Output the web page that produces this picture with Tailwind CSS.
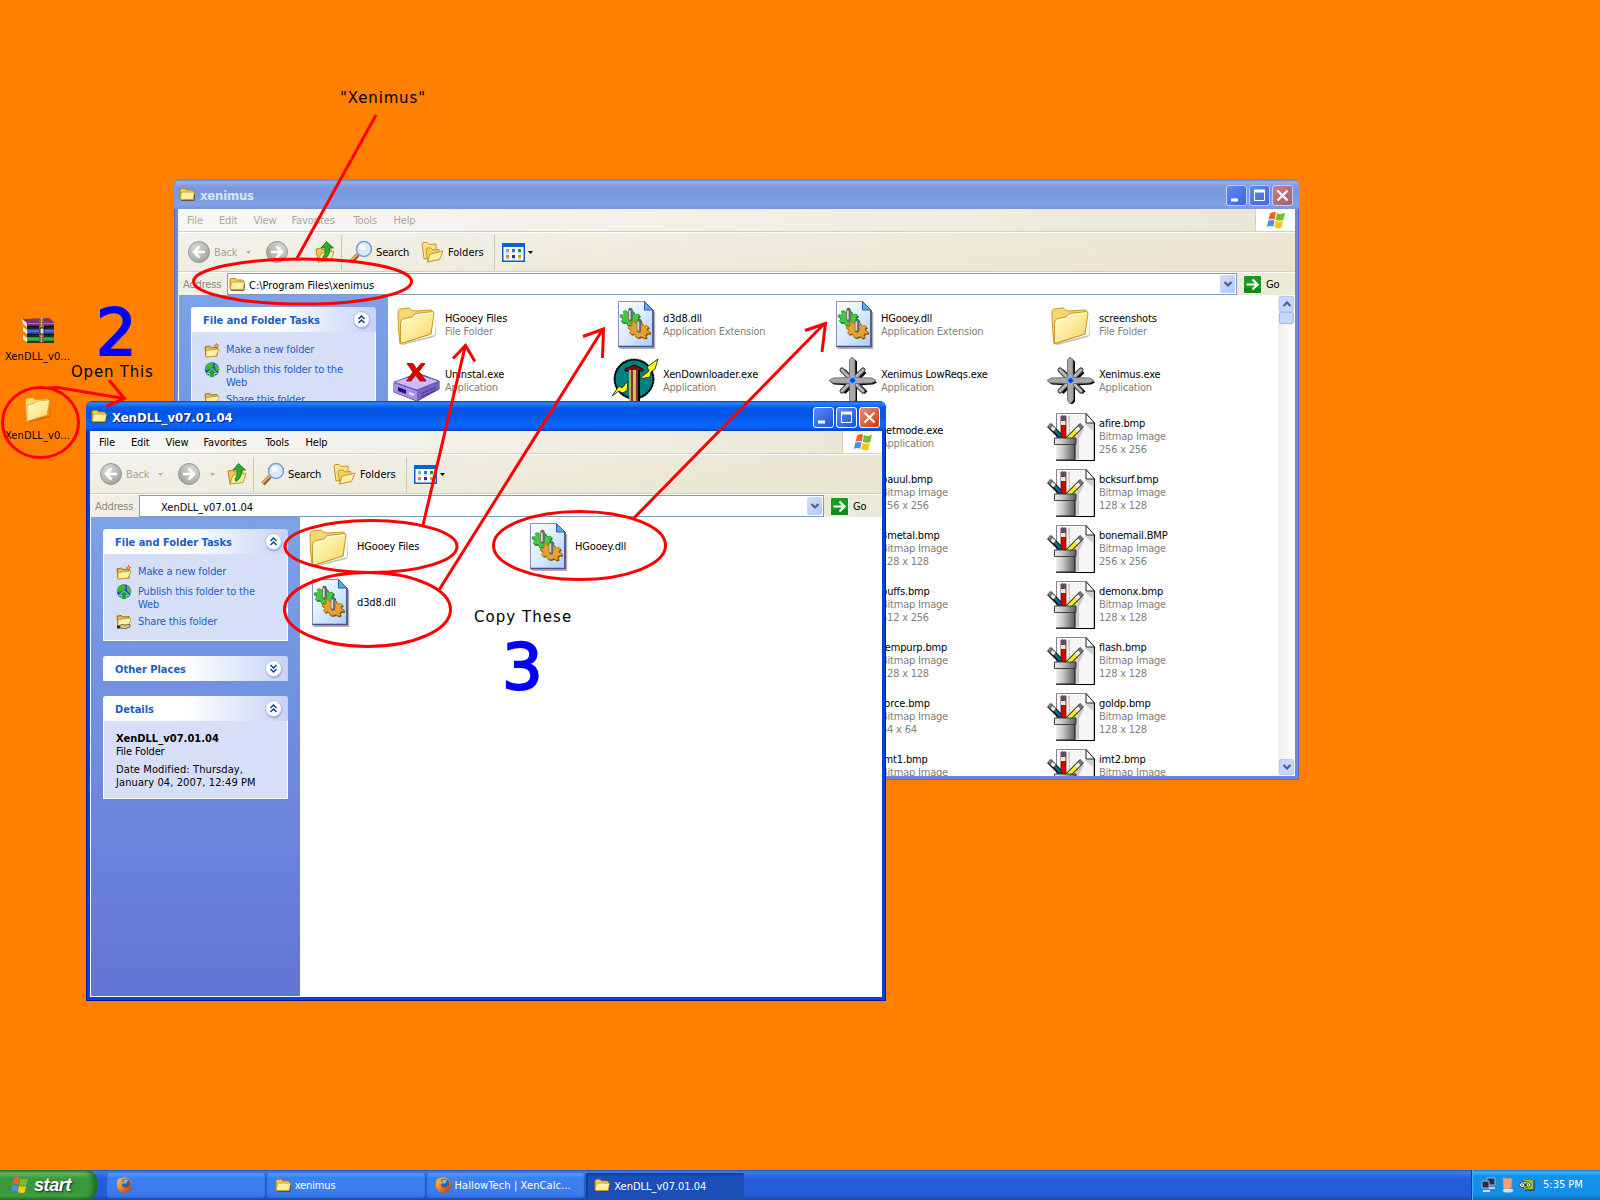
<!DOCTYPE html>
<html lang="en">
<head>
<meta charset="utf-8">
<title>Desktop</title>
<script src="https://cdn.jsdelivr.net/npm/@tailwindcss/browser@4"></script>
</head>
<body class="relative w-[1600px] h-[1200px] overflow-hidden bg-[#ff8000] font-['DejaVu_Sans_Condensed','DejaVu_Sans',sans-serif] [font-stretch:condensed] text-[11px] leading-[13px] tracking-[-0.15px] text-black">

<svg class="absolute w-0 h-0" aria-hidden="true">
  <defs>
    <linearGradient id="gFold" x1="0" y1="0" x2="1" y2="1"><stop offset="0" stop-color="#fffbd0"/><stop offset=".5" stop-color="#fdec9a"/><stop offset="1" stop-color="#f4cc5c"/></linearGradient>
    <linearGradient id="gPage" x1="0" y1="0" x2="1" y2="1"><stop offset="0" stop-color="#fff"/><stop offset=".5" stop-color="#d9ecfd"/><stop offset="1" stop-color="#a9cdf5"/></linearGradient>
    <linearGradient id="gCup" x1="0" y1="0" x2="1" y2="0"><stop offset="0" stop-color="#eee"/><stop offset=".35" stop-color="#c8c8c8"/><stop offset="1" stop-color="#5a5a5a"/></linearGradient>
    <radialGradient id="gBtn" cx=".35" cy=".3" r=".8"><stop offset="0" stop-color="#d8d8d4"/><stop offset=".6" stop-color="#b9b9b5"/><stop offset="1" stop-color="#9a9a96"/></radialGradient>
    <linearGradient id="gFox" x1="0" y1="0" x2="1" y2="1"><stop offset="0" stop-color="#ffc04a"/><stop offset=".5" stop-color="#f08020"/><stop offset="1" stop-color="#b83008"/></linearGradient>
    <path id="gear" d="M-1.800 -10.500h3.600l.6 2.600 2.400 1 2.400-1.600 2.400 2.400-1.500 2.300 1 2.300 2.700.6v3l-2.700.7-1 2.300 1.500 2.300-2.400 2.300-2.400-1.500-2.400 1L1.800 10.500h-3.600l-.6-2.600-2.400-1-2.400 1.500-2.400-2.300 1.500-2.300-1-2.300-2.700-.7v-3l2.700-.6 1-2.300-1.500-2.300 2.400-2.400 2.400 1.600 2.400-1z"/>
    <symbol id="folder48" viewBox="0 0 48 48">
      <path d="M8 43 L42 34 L43 13 L43 34 L41 36 L10 44z" fill="#000" opacity=".25"/>
      <path d="M5 12 C5 8 7 8 8 8 L15 7 C17 6.500 18 9 19 9.500 L23 10 L38 9 L40 10.500 L38 33 L7 43 Q5 28 5 12z" fill="#f6d872" stroke="#c79a28"/>
      <path d="M7.500 22 Q7.500 18 11 17.500 L19 16 L22 12.500 L40 10.500 L41 12.500 L38 33 L7.500 42.500z" fill="url(#gFold)" stroke="#c79a28"/>
      <path d="M9 24 Q9 19.500 11.500 19 L19.500 17.500 L22.500 14 L39.500 12" fill="none" stroke="#fffde8"/>
    </symbol>
    <symbol id="folder16" viewBox="0 0 16 16">
      <path d="M1 4 Q1 2.500 2 2.500 L6 2.200 L7.500 4 L13.500 4 L14.500 5 L14.500 13 L2 14 L1 13z" fill="#f5cf5c" stroke="#a87a18" stroke-width=".9"/>
      <path d="M2.500 6 L15.500 6.200 L14.500 13.300 L2 13.500 L1.500 12z" fill="#ffefa8" stroke="#c79a28" stroke-width=".8"/>
      <path d="M2 14.500 H15 L15.600 8" fill="none" stroke="#5a4410" stroke-width=".8"/>
    </symbol>
    <symbol id="dll" viewBox="0 0 48 48">
      <path d="M9 47.500 H43.500 V11" fill="none" stroke="#000" stroke-opacity=".3" stroke-width="1.500"/>
      <path d="M7.500 .5 H33.500 L42 9 V45.500 H7.500z" fill="url(#gPage)" stroke="#8a8fc0" stroke-width="1"/>
      <path d="M42 9 V45.700 H7.500" fill="none" stroke="#4a4c8c" stroke-width="1.700"/>
      <path d="M33.500 .5 V9 H42z" fill="#5aa4f0" stroke="#2d5cae" stroke-width="1"/>
      <use href="#gear" transform="translate(20.500 18.500) rotate(12) scale(.92 .72)" fill="#147018"/>
      <use href="#gear" transform="translate(19.500 17.500) rotate(12) scale(.9 .7)" fill="#44c83e" stroke="#1e8a24" stroke-width=".8"/>
      <use href="#gear" transform="translate(29 30) rotate(12) scale(.95 .75)" fill="#7c4808"/>
      <use href="#gear" transform="translate(28 29) rotate(12) scale(.93 .73)" fill="#e8a030" stroke="#a86410" stroke-width=".8"/>
      <path d="M19.500 9v9.500M28 20v9.500" stroke="#666" stroke-width="4.500" stroke-linecap="round"/><path d="M18.800 9.500v9M27.300 20.500v9" stroke="#d8d8d8" stroke-width="1.800"/>
    </symbol>
    <symbol id="bmp" viewBox="0 0 48 48">
      <path d="M9.500 .5 H39 L47 9 V47.500 H9.500z" fill="#f6f6f6" stroke="#888"/>
      <path d="M38 11 L46 18 V10z" fill="#d0d0d0"/>
      <path d="M21 3 H23 V24 L34 14 L37 17 L32 25 V46 H24 L22 26z" fill="#ccc"/>
      <path d="M39 .5 V10 H47.500z" fill="#fff" stroke="#222"/>
      <path d="M47.500 10 V47.500 H9" fill="none" stroke="#000"/>
      <path d="M2 12 L16 26" stroke="#111" stroke-width="5.500"/><path d="M6 15.500 L16 25.500" stroke="#00708c" stroke-width="3"/><path d="M4.500 14 L7.500 17" stroke="#eee" stroke-width="3.500"/><path d="M1.800 11.600 L4.500 14.200" stroke="#777" stroke-width="4"/>
      <path d="M35 12 L21 26" stroke="#333" stroke-width="5.500"/><path d="M31 16 L21 26" stroke="#f4ee30" stroke-width="3.500"/><path d="M32.500 14.500 L29.500 17.500" stroke="#eee" stroke-width="3.500"/><path d="M35 12 L32.500 14.500" stroke="#777" stroke-width="4"/>
      <path d="M14 3h5v22h-5z" fill="#d80000" stroke="#500" stroke-width=".7"/><path d="M14 8h4.500v4h-4.500z" fill="#eee"/><path d="M14 3h5v5h-5z" fill="#555"/>
      <path d="M9 31 H28 V47.500 H9z" fill="url(#gCup)"/><path d="M28 31V47H9" fill="none" stroke="#111"/>
      <path d="M7.500 25 H29 V31.500 H7.500z" fill="url(#gCup)" stroke="#333" stroke-width=".9"/>
    </symbol>
    <symbol id="star" viewBox="0 0 48 48">
      <g fill="#000" transform="translate(2 1.600)"><path d="M23 0 L26 3 V20 L42 21 L46 24 L42 26 L26 27 V43 L23 46 L20 43 V27 L3 26 L0 24 L3 22 L20 20 V3z"/><path d="M13 12l22 22M34 13L13 34" stroke="#000" stroke-width="4"/></g>
      <path d="M13 13l21 21M34 13L13 34" stroke="#444" stroke-width="5" stroke-linecap="round"/><path d="M13 13l21 21M34 13L13 34" stroke="#b8b8b8" stroke-width="2.800" stroke-linecap="round"/>
      <path d="M23 0 L26 3 V20.500 L43 21 L47 23.500 L43 26 L26.500 26.500 V43 L23 47 L20.500 43 V26.500 L4 26 L0 23.500 L4 21 L20.500 20.500 V3z" fill="#a8a8a8" stroke="#666" stroke-width=".8"/>
      <path d="M23.500 19.500 L27.500 23.500 L23.500 27.500 L19.500 23.500z" fill="#30c8ff"/><path d="M23.500 21v5M21 23.500h5" stroke="#0030ff" stroke-width="2"/>
    </symbol>
    <symbol id="uninst" viewBox="0 0 48 48">
      <path d="M1 26 L24 16 L46 24 V32 L24 44 L1 35z" fill="#5c44a8" stroke="#38287c"/>
      <path d="M1 25 L24 17 L46 24 L24 33z" fill="#cbbcf4" stroke="#7c64c8"/>
      <path d="M1 26 L24 34 V44 L1 35z" fill="#a890e4"/><path d="M24 34 L46 25 V32 L24 44z" fill="#7860c4"/>
      <path d="M5 30 L13 33 V37 L5 34z" fill="#201470"/><path d="M16 36l5 2" stroke="#e8e0ff" stroke-width="2"/><path d="M28 37l15-7M28 40l15-7" stroke="#4a3494"/>
      <path d="M14 14.500 H20 L23.500 20 L28 14.500 H32 L26 22.500 L33 32 H27 L22.500 26 L18 32 H13.500 L20 23z" transform="translate(0 -8)" fill="#e00000" stroke="#900" stroke-width=".8"/>
    </symbol>
    <symbol id="down" viewBox="0 0 48 48">
      <circle cx="23" cy="22" r="20" fill="#000" stroke="#000" stroke-dasharray="2 1"/><circle cx="23" cy="22" r="18.500" fill="#008080"/>
      <path d="M14 12 L23 8 L32 12 V14 H14z" fill="#7a1010" stroke="#200"/><path d="M18 13h10v35h-10z" fill="#7c3038"/><path d="M18 13h2v35h-2z" fill="#c0b060"/><path d="M22 13h3v35h-3z" fill="#d8c040"/><path d="M27 13h2v35h-2z" fill="#100"/>
      <path d="M47 2 L36 10 L38 14 L28 22 L39 20 L40 15 L44 12z" fill="#ffff20" stroke="#222" stroke-width=".9"/>
      <path d="M1 39 L8 29 L11 31 L17 24 L16 34 L11 36 L8 34z" fill="#ffff20" stroke="#222" stroke-width=".9"/>
    </symbol>
    <symbol id="flag" viewBox="0 0 20 18">
      <path d="M4 2.500 Q7 0 10 1.500 L8.700 8.500 Q5.500 7.200 2.500 9z" fill="#f0602c"/>
      <path d="M11 2 Q14.500 4 19 1.800 L17.300 9 Q13.500 10.500 9.700 8.800z" fill="#72c02c"/>
      <path d="M2.200 9.800 Q5.500 8.200 8.500 9.500 L7.200 15.800 Q4 14 .8 16z" fill="#4a8ee8"/>
      <path d="M9.500 9.800 Q13 11.400 17 10 L15.600 16.500 Q12 18.500 8.200 16.300z" fill="#fcc414"/>
    </symbol>
    <symbol id="fox" viewBox="0 0 16 16">
      <circle cx="8" cy="8" r="7.700" fill="url(#gFox)"/><circle cx="8.800" cy="6.600" r="5.200" fill="#2d62b0"/><path d="M6.500 3 Q9 1.500 12 3 Q10 4 10.500 6 L8 7z" fill="#7ab8e8"/>
      <path d="M.6 5 Q1 2 3 1.300 Q3.500 3 5.500 3.500 L8 6 Q5 6.500 5.500 9 Q8 12 12 9.800 Q14.500 8.500 14.500 4 Q16.500 8 14 12 Q11 16 6.500 15 Q0 13 .6 5z" fill="url(#gFox)"/>
    </symbol>
    <symbol id="newf" viewBox="0 0 16 16"><path d="M1 5 L5 4 L7 5.500 L13 5 V14 L2 15z" fill="#e8b84a" stroke="#9c7018"/><path d="M2 9 L6 8 L15 7 L12 14 L2 15z" fill="#fff0b0" stroke="#c79a28" stroke-width=".8"/><path d="M12.500 .5l.8 2 2 .5-1.500 1.500.5 2.300-2-1.300-2 1 .8-2.300-1.300-1.500 2 0z" fill="#f0501c"/><circle cx="12.500" cy="4" r="1" fill="#ffd040"/></symbol>
    <symbol id="globe" viewBox="0 0 16 16"><circle cx="8" cy="7.500" r="7.200" fill="#2858b4"/><path d="M2 3 Q5 0 8 .5 L10 4 L6 7 L2 8 L.8 7z" fill="#3cb83c"/><path d="M11 1 L15 6 V10 L12 8 L11 5z" fill="#48c040"/><path d="M8 6.500 L13 11.500 H10.300 V15.500 H5.700 V11.500 H3z" fill="#18a030" stroke="#d8f0d8" stroke-width=".7"/></symbol>
    <symbol id="share" viewBox="0 0 16 16"><path d="M1 2 L5 1.500 L7 3 L13 2.500 V11 L2 12z" fill="#e8b84a" stroke="#9c7018"/><path d="M2 6 L6 5 L15 4 L13 11 L2 12z" fill="#fff0b0" stroke="#c79a28" stroke-width=".8"/><path d="M1 11.500h3v3h-3z" fill="#223"/><path d="M4 11.500 Q6 9.500 9 11 L14 10.500 V13 L9 14.800 L4 14z" fill="#e8c090" stroke="#553" stroke-width=".8"/></symbol>
    <symbol id="upf" viewBox="0 0 20 22"><path d="M1 8 L6 7 L7 9 L16 8 V19 L3 21z" fill="#f0c850" stroke="#b48a20"/><path d="M3 21 L6 12 L19 10.500 L16 19.500z" fill="#ffefa0" stroke="#c79a28"/><path d="M11.500 .5 L18.500 7 H14.500 Q15 15 9 18.500 L8 16 Q11 13 10.200 7 H6z" fill="#2cac2c" stroke="#107010" stroke-width=".8"/></symbol>
    <symbol id="search" viewBox="0 0 24 24"><path d="M2 22 L9 14.500" stroke="#a05c28" stroke-width="4.500"/><path d="M1.500 21 L8.500 14" stroke="#f0a868" stroke-width="2"/><circle cx="15" cy="9" r="7.500" fill="#d4ebff" stroke="#7a9cd0" stroke-width="1.500"/><circle cx="13.500" cy="7" r="3" fill="#fff" opacity=".85"/></symbol>
    <symbol id="folders" viewBox="0 0 24 22"><path d="M1 3 L2 1.500 L6 1.500 L8 3.500 L15 3 V15 L3 18z" fill="#fbe28c" stroke="#c4962c"/><path d="M5 9 L6 7 L10 7 L12 9 L18 8.500 V18 L7 21z" fill="#f6d060" stroke="#c4962c"/><path d="M6.500 21 L9 13 L14 12 L22 10 L18.500 18.500z" fill="#fff0a8" stroke="#c4962c"/></symbol>
    <symbol id="views" viewBox="0 0 23 19"><rect x=".75" y=".75" width="21.500" height="17.500" fill="#fff" stroke="#0a5cc8" stroke-width="1.500"/><path d="M0 0h23v4h-23z" fill="#0a64d8"/><g><path d="M4 6h3v3h-3z" fill="#9898c8"/><path d="M10 6h3v3h-3z" fill="#2878d0"/><path d="M16 6h3v3h-3z" fill="#209820"/><path d="M4 12h3v3h-3z" fill="#f07840"/><path d="M10 12h3v3h-3z" fill="#1038a0"/><path d="M16 12h3v3h-3z" fill="#d89c20"/><path d="M4 10h3M10 10h3M16 10h3M4 16h3M10 16h3M16 16h3" stroke="#aaa" stroke-width=".8"/></g></symbol>
    <symbol id="back" viewBox="0 0 22 22"><circle cx="11" cy="11" r="10.500" fill="url(#gBtn)" stroke="#989894"/><path d="M11.500 5.500 L6 11 L11.500 16.500 M6.500 11 H17" fill="none" stroke="#fff" stroke-width="2.600"/></symbol>
    <symbol id="rar" viewBox="0 0 32 25">
      <path d="M1 1 L27 0 L32 4 V8 H6 L1 5z" fill="#7c3474"/><path d="M0 1l5 4v4l-4-3z" fill="#f0e8f0"/><path d="M5 8.500h27" stroke="#111" stroke-width="1.500"/>
      <path d="M5 9 H30 L32 11 V16 H6z" fill="#2450c4"/><path d="M1 9l4 3v4l-4-3z" fill="#f0f0f8"/><path d="M5 10h27M5 16.500h27" stroke="#111" stroke-width="1.500"/>
      <path d="M5 17 H30 L32 19 V23 H6z" fill="#189838"/><path d="M1 17l4 3v4l-4-3z" fill="#f0f8f0"/><path d="M5 18h27M5 24h27" stroke="#111" stroke-width="1.500"/>
      <path d="M6 5.500h26M6 13h26M6 21h26" stroke="#fff" stroke-opacity=".35"/>
      <path d="M17 0h5v24h-5z" fill="#8c5828"/><path d="M19.500 0v24" stroke="#e8d8b0" stroke-width="1.500" stroke-dasharray="1.500 1"/><rect x="18" y="10" width="4" height="6" rx="1.500" fill="#ddd" stroke="#222"/>
    </symbol>
    <symbol id="chev" viewBox="0 0 20 20"><circle cx="10" cy="11" r="8.500" fill="#7088c8" opacity=".45"/><circle cx="9.500" cy="9.500" r="8" fill="#fff" stroke="#b8bcd8"/><path d="M6.500 9 L9.500 6 L12.500 9 M6.500 13 L9.500 10 L12.500 13" fill="none" stroke="#0a3c9c" stroke-width="1.500"/></symbol>
    <symbol id="chevd" viewBox="0 0 20 20"><circle cx="10" cy="11" r="8.500" fill="#7088c8" opacity=".45"/><circle cx="9.500" cy="9.500" r="8" fill="#fff" stroke="#b8bcd8"/><path d="M6.500 6 L9.500 9 L12.500 6 M6.500 10 L9.500 13 L12.500 10" fill="none" stroke="#0a3c9c" stroke-width="1.500"/></symbol>
    <symbol id="vdown" viewBox="0 0 10 10"><path d="M1.500 3 L5 6.500 L8.500 3" fill="none" stroke="#4d6185" stroke-width="2.200"/></symbol>
    <symbol id="vup" viewBox="0 0 10 10"><path d="M1.500 7 L5 3.500 L8.500 7" fill="none" stroke="#4d6185" stroke-width="2.200"/></symbol>
    <symbol id="car" viewBox="0 0 5 3"><path d="M0 0h5L2.500 3z" fill="currentColor"/></symbol>
  </defs>
</svg>

<!-- Desktop shortcuts -->
<div class="absolute left-0 top-[318px] w-[75px] flex flex-col items-center tracking-[0.1px]">
  <svg class="w-8 h-[25px]"><use href="#rar"/></svg>
  <span class="mt-[7px]">XenDLL_v0...</span>
</div>
<div class="absolute left-0 top-[393px] w-[75px] flex flex-col items-center tracking-[0.1px]">
  <svg class="w-8 h-8"><use href="#folder48"/></svg>
  <span class="mt-[4px]">XenDLL_v0...</span>
</div>

<div id="win1" class="absolute left-[174px] top-[179px] w-[1125px] h-[601px]"></div>
<div id="win2" class="absolute left-[86px] top-[401px] w-[800px] h-[600px]"></div>

<!-- Taskbar -->
<div class="absolute left-0 top-[1170px] w-[1600px] h-[30px] flex bg-[linear-gradient(#1f50b8_0,#3b83ee_2px,#2e6be6_5px,#245cdc_10px,#245edb_24px,#1d49b0_30px)] text-white">
  <div class="w-[97px] h-[30px] rounded-r-[10px] flex items-center pl-[10px] bg-[linear-gradient(#2f7a2f_0,#6cb86a_3px,#3f9a3f_8px,#3a963a_20px,#3ea23e_26px,#2a742a_30px)] shadow-[inset_-4px_0_5px_#1f6a1f]">
    <svg class="w-[19px] h-[18px]"><use href="#flag"/></svg>
    <span class="ml-[5px] mb-[1px] font-['Liberation_Sans',sans-serif] font-bold italic text-[18px] leading-[20px] tracking-[-0.4px] [text-shadow:1px_1px_2px_#123]">start</span>
  </div>
  <div class="ml-[10px] mt-[3px] flex h-[25px] w-[637px] gap-[2px]">
    <div class="w-[158px] rounded-[2px] flex items-center pl-[9px] bg-[linear-gradient(#5c9cf8,#3c80f0_5px,#3a7cee_20px,#2f6ce0)] shadow-[inset_0_0_1px_#1d4cb0]"><svg class="w-[17px] h-[16px] mb-[2px]"><use href="#fox"/></svg></div>
    <div class="w-[158px] rounded-[2px] flex items-center pl-[8px] bg-[linear-gradient(#5c9cf8,#3c80f0_5px,#3a7cee_20px,#2f6ce0)] shadow-[inset_0_0_1px_#1d4cb0]"><svg class="w-4 h-4 mb-[2px]"><use href="#folder16"/></svg><span class="ml-[4px]">xenimus</span></div>
    <div class="w-[158px] rounded-[2px] flex items-center pl-[8px] bg-[linear-gradient(#5c9cf8,#3c80f0_5px,#3a7cee_20px,#2f6ce0)] shadow-[inset_0_0_1px_#1d4cb0]"><svg class="w-[17px] h-[16px] mb-[2px]"><use href="#fox"/></svg><span class="ml-[3px] whitespace-nowrap tracking-[0.1px]">HallowTech | XenCalc...</span></div>
    <div class="w-[158px] rounded-[2px] flex items-center pl-[8px] pt-[1px] bg-[#1b4fb8] shadow-[inset_1px_1px_2px_#0f3478]"><svg class="w-4 h-4 mb-[2px]"><use href="#folder16"/></svg><span class="ml-[4px] tracking-[0]">XenDLL_v07.01.04</span></div>
  </div>
  <div class="ml-auto w-[129px] h-[30px] flex items-center border-l border-[#0c3c9c] bg-[linear-gradient(#1478d8_0,#38b4f8_2px,#1690e8_6px,#1290e8_24px,#0e6cc0_30px)] shadow-[inset_1px_0_0_#3cb8f8]">
    <svg class="ml-[9px] w-[54px] h-[16px]" viewBox="0 0 54 16">
      <path d="M6 1h8v7h-8z" fill="#282c50" stroke="#a8b0d8"/><path d="M8 10h6v2h-6z" fill="#ccd"/><path d="M1 4h7v7h-7z" fill="#282c50" stroke="#a8b0d8"/><path d="M2 13h7v2h-7z" fill="#dde"/>
      <path d="M22 1l9 1-1 9-7 1z" fill="#f4a07c" stroke="#e88868"/><ellipse cx="27" cy="13.500" rx="5.500" ry="2" fill="#d8dce8"/>
      <path d="M43 3h10v10h-10z" fill="#98c020"/><path d="M53 3v10h-9" fill="none" stroke="#222"/><path d="M37.500 8q6.500-7 13 0q-6.500 6-13 0z" fill="#fff" stroke="#333" stroke-width=".8"/><path d="M40 8q4-4 8 0q-4 4-7 0" fill="none" stroke="#5c8010"/><circle cx="44.500" cy="8" r="1.300" fill="#222"/>
    </svg>
    <span class="ml-[8px] mb-[1px] whitespace-nowrap tracking-[0]">5:35 PM</span>
  </div>
</div>

<!-- Hand-drawn notes -->
<svg class="absolute left-0 top-0 w-[1600px] h-[1200px]" fill="none" stroke="#f00" stroke-width="3" viewBox="0 0 1600 1200">
  <path d="M376 115 L296 260"/>
  <ellipse cx="302.500" cy="281.500" rx="109" ry="22.500"/>
  <ellipse cx="40.500" cy="422.500" rx="38" ry="35"/>
  <path d="M48 388 L58 387.500 L124 398.500 M109 380 L124.500 398.500 L106 406.500"/>
  <path d="M423 525 L465.500 345 M453 358.500 L465.500 345.500 L475 361.500"/>
  <path d="M439 590 L603 329 M583 336.500 L603.500 329 L602.500 358"/>
  <path d="M634 518 L825 323 M805 330.500 L825.500 323.500 L822 352"/>
  <ellipse cx="371" cy="546.500" rx="86" ry="26"/>
  <ellipse cx="367.500" cy="609.500" rx="83" ry="37"/>
  <ellipse cx="579.500" cy="545.500" rx="86" ry="34"/>
</svg>
<div class="absolute left-[340px] top-[88px] font-['DejaVu_Sans',sans-serif] [font-stretch:normal] text-[15px] leading-[20px] tracking-[0.85px]">"Xenimus"</div>
<div class="absolute left-[71px] top-[362px] font-['DejaVu_Sans',sans-serif] [font-stretch:normal] text-[15px] leading-[20px] tracking-[0.8px]">Open This</div>
<div class="absolute left-[474px] top-[607px] font-['DejaVu_Sans',sans-serif] [font-stretch:normal] text-[15px] leading-[20px] tracking-[1.05px]">Copy These</div>
<div class="absolute left-[96px] top-[309px] font-['DejaVu_Sans',sans-serif] [font-stretch:normal] text-[64px] leading-[48px] text-[#0000ff] [-webkit-text-stroke:2px_#0000ff]">2</div>
<div class="absolute left-[502px] top-[643px] font-['DejaVu_Sans',sans-serif] [font-stretch:normal] text-[64px] leading-[48px] text-[#0000ff] [-webkit-text-stroke:2px_#0000ff]">3</div>

<script>
const icon = (id, cls) => `<svg class="${cls}"><use href="#${id}"/></svg>`;

const item = ([ic, name, ...sub]) => name ? `<div class="flex items-center h-14 w-[218px] overflow-hidden">
  ${icon(ic, 'w-12 h-12 shrink-0')}
  <div class="ml-[4px] mb-[1px] whitespace-nowrap"><div>${name}</div>${sub.map(s => `<div class="text-[#808080] tracking-[-0.22px]">${s}</div>`).join('')}</div></div>` : '<div></div>';

const head = (t, ch) => `<div class="h-[25px] rounded-t-[3px] flex items-center justify-between pl-[12px] pr-[4px] bg-[linear-gradient(90deg,#fff_45%,#c6d3f7)]">
  <span class="font-bold text-[#215dc6] tracking-[0] pt-[2px]">${t}</span>${icon(ch, 'w-5 h-5')}</div>`;

const task = (ic, t) => `<div class="flex gap-[6px] text-[#215dc6]">${icon(ic, 'w-4 h-4 shrink-0')}<span class="w-[125px] pt-[1px]">${t}</span></div>`;

const tasks = `<div class="w-[185px]">${head('File and Folder Tasks', 'chev')}
  <div class="h-[87px] border border-t-0 border-white bg-[#d6dff7] pt-[10px] pl-[12px] flex flex-col gap-[4px]">
  ${task('newf', 'Make a new folder')}${task('globe', 'Publish this folder to the Web')}<div class="-mt-[1px]">${task('share', 'Share this folder')}</div></div></div>`;

const more = `<div class="w-[185px]">${head('Other Places', 'chevd')}</div>
  <div class="w-[185px]">${head('Details', 'chev')}
  <div class="h-[78px] border border-t-0 border-white bg-[#d6dff7] pt-[11px] pl-[12px]">
  <div class="font-bold tracking-[0.05px]">XenDLL_v07.01.04</div><div>File Folder</div><div class="mt-[5px] w-[150px] tracking-[0.1px]">Date Modified: Thursday, January 04, 2007, 12:49 PM</div></div></div>`;

function win(o) {
  const cap = (bg, inner) => `<div class="w-[21px] h-[21px] rounded-[3px] border ${o.btnBorder} ${bg}"><svg class="w-[19px] h-[19px]" viewBox="0 0 19 19" fill="none" stroke="#fff">${inner}</svg></div>`;
  return `<div class="w-full h-full flex flex-col rounded-t-[7px] overflow-hidden px-[4px] pb-[4px] ${o.frame}">
  <div class="h-[30px] -mx-[4px] shrink-0 flex items-center pl-[5px] pr-[6px] ${o.title}">
    ${icon('folder16', 'w-4 h-4 mb-[1px]')}
    <span class="ml-[5px] pt-[4px] font-['DejaVu_Sans_Condensed','DejaVu_Sans',sans-serif] font-bold text-[13px] leading-[16px] ${o.titleText}">${o.name}</span>
    <div class="ml-auto flex gap-[2px] pt-[3px]">
      ${cap(o.blue, '<path d="M4 14h7" stroke-width="3"/>')}
      ${cap(o.blue, '<path d="M4.500 4.500h10v10h-10z"/><path d="M4 5h11" stroke-width="3"/>')}
      ${cap(o.red, '<path d="M4.500 4.500l10 10M14.500 4.500l-10 10" stroke-width="2.200"/>')}
    </div>
  </div>
  <div class="h-[23px] shrink-0 flex border-b border-[#d4cfb8] bg-[linear-gradient(90deg,#f7f7f7,#ebe7d7)] ${o.menuText}">
    <div class="flex items-center pl-[9px]"><span class="w-[32px]">File</span><span class="w-[34.500px]">Edit</span><span class="w-[38px]">View</span><span class="w-[62px]">Favorites</span><span class="w-[40px]">Tools</span><span>Help</span></div>
    <div class="ml-auto w-[40px] border-l border-[#d4cfb8] bg-white flex items-center justify-center">${icon('flag', 'w-5 h-[18px]')}</div>
  </div>
  <div class="h-[40px] shrink-0 flex items-center border-t border-b border-t-white border-b-[#d4cfb8] bg-[linear-gradient(#fff0,#e6e0c840),linear-gradient(90deg,#f3f2ec,#ebe7d3)]">
    ${icon('back', 'ml-[10px] w-[22px] h-[22px]')}
    <span class="ml-[4px] w-[32px] text-[#a8a494]">Back</span>
    ${icon('car', 'w-[5px] h-[3px] text-[#b8b4a4]')}
    <svg class="ml-[15px] w-[22px] h-[22px] -scale-x-100"><use href="#back"/></svg>
    ${icon('car', 'ml-[10px] w-[5px] h-[3px] text-[#b8b4a4]')}
    ${icon('upf', 'ml-[12px] w-[20px] h-[22px]')}
    <div class="ml-[6px] w-px h-[35px] bg-[#cdc8b0]"></div>
    ${icon('search', 'ml-[7px] w-6 h-6')}
    <span class="ml-[3px] w-[45px]">Search</span>
    ${icon('folders', 'w-6 h-[22px]')}
    <span class="ml-[3px] w-[46px] tracking-[0]">Folders</span>
    <div class="w-px h-[35px] bg-[#cdc8b0]"></div>
    ${icon('views', 'ml-[7px] w-[23px] h-[19px]')}
    ${icon('car', 'ml-[3px] w-[5px] h-[3px]')}
  </div>
  <div class="h-[23px] shrink-0 flex items-center border-t border-white bg-[linear-gradient(90deg,#f0efe8,#ece9d8)]">
    <span class="pl-[5px] w-[49px] text-[#8c897c]">Address</span>
    <div class="flex-1 h-[22px] border border-[#7f9db9] bg-white flex items-center pl-[1px] pr-[1px]">
      <div class="w-[16px] h-[16px]">${o.addrIcon}</div><span class="ml-[4px] pt-[2px] tracking-[0]">${o.addr}</span>
      <div class="ml-auto w-[15px] h-[18px] rounded-[2px] bg-[linear-gradient(135deg,#d4dffc,#b0c8f8)] flex items-center justify-center">${icon('vdown', 'w-[10px] h-[10px]')}</div>
    </div>
    <svg class="ml-[6px] w-[19px] h-[19px]" viewBox="0 0 19 19"><rect x=".5" y=".5" width="18" height="18" rx="1.500" fill="#1e9824" stroke="#e4f4e4"/><path d="M1 13h17v5h-17z" fill="#006c08" opacity=".35"/><path d="M3.500 9.500h11M9.500 4.500l5 5-5 5" fill="none" stroke="#fff" stroke-width="2.200"/></svg>
    <span class="ml-[4px] w-[29px]">Go</span>
  </div>
  <div class="flex-1 min-h-0 flex bg-white pl-[1px] ${o.bodyPad}">
    <div class="w-[209px] overflow-hidden shrink-0 flex flex-col gap-[15px] pl-[12px] pt-[12px] bg-[linear-gradient(#7ba2e7,#6375d6)]">${o.side}</div>
    <div class="flex-1 overflow-hidden pl-[5px] pt-[2px]"><div class="grid auto-rows-[56px] ${o.cols}">${o.items.map(item).join('')}</div></div>
    ${o.scroll}
  </div></div>`;
}

const F = 'File Folder', A = 'Application', X = 'Application Extension', B = 'Bitmap Image';
document.getElementById('win1').innerHTML = win({
  name: 'xenimus', addr: 'C:\\Program Files\\xenimus', addrIcon: icon('folder16', 'w-4 h-4'),
  frame: 'bg-[#7484dc] shadow-[inset_1px_-1px_0_#5c68c0,inset_-1px_0_0_#5c68c0]', title: 'bg-[linear-gradient(#6478cc_0,#92b2ec_3px,#7c98e0_8px,#7a96df_16px,#80a4e8_25px,#7c94dc_30px)]',
  titleText: 'text-[#d8e4f8] tracking-[-0.2px]', menuText: 'text-[#aca899]', btnBorder: 'border-[#c0ccf4]',
  blue: 'bg-[linear-gradient(135deg,#6088ec,#3c68e0)]', red: 'bg-[linear-gradient(135deg,#c88090,#a85c6c)]', bodyPad: '',
  side: tasks, cols: 'grid-cols-[218px_218px_218px_218px]',
  scroll: `<div class="w-[17px] bg-[linear-gradient(90deg,#f0efea,#fefefb)] flex flex-col items-center pt-[1px] pb-[1px]">
    <div class="w-[15px] h-[16px] rounded-[2px] border border-[#b4c8f4] bg-[#c6d6fc] flex items-center justify-center">${icon('vup', 'w-[10px] h-[10px]')}</div>
    <div class="w-[15px] h-[12px] rounded-[2px] border border-[#a0b8ec] bg-[#c6d6fc]"></div>
    <div class="mt-auto w-[15px] h-[16px] rounded-[2px] border border-[#b4c8f4] bg-[#c6d6fc] flex items-center justify-center">${icon('vdown', 'w-[10px] h-[10px]')}</div></div>`,
  items: [
    ['folder48', 'HGooey Files', F], ['dll', 'd3d8.dll', X], ['dll', 'HGooey.dll', X], ['folder48', 'screenshots', F],
    ['uninst', 'Uninstal.exe', A], ['down', 'XenDownloader.exe', A], ['star', 'Xenimus LowReqs.exe', A], ['star', 'Xenimus.exe', A],
    [], [], ['star', 'setmode.exe', A], ['bmp', 'afire.bmp', B, '256 x 256'],
    [], [], ['bmp', 'bauul.bmp', B, '256 x 256'], ['bmp', 'bcksurf.bmp', B, '128 x 128'],
    [], [], ['bmp', '3metal.bmp', B, '128 x 128'], ['bmp', 'bonemail.BMP', B, '256 x 256'],
    [], [], ['bmp', 'buffs.bmp', B, '512 x 256'], ['bmp', 'demonx.bmp', B, '128 x 128'],
    [], [], ['bmp', 'tempurp.bmp', B, '128 x 128'], ['bmp', 'flash.bmp', B, '128 x 128'],
    [], [], ['bmp', 'force.bmp', B, '64 x 64'], ['bmp', 'goldp.bmp', B, '128 x 128'],
    [], [], ['bmp', 'imt1.bmp', B, '128 x 128'], ['bmp', 'imt2.bmp', B, '128 x 128']]
});
document.getElementById('win2').innerHTML = win({
  name: 'XenDLL_v07.01.04', addr: 'XenDLL_v07.01.04', addrIcon: '',
  frame: 'bg-[#0842d4] shadow-[inset_1px_-1px_0_#0018a0,inset_-1px_0_0_#0018a0]', title: 'bg-[linear-gradient(#0a3cc0_0,#2a86fc_2px,#0458e8_7px,#0454e4_14px,#0668fc_23px,#0560f4_27px,#0340b8_30px)]',
  titleText: 'text-white tracking-[0] [text-shadow:1px_1px_1px_#0a1883]', menuText: '', btnBorder: 'border-white',
  blue: 'bg-[linear-gradient(135deg,#5c8cf4,#2050d8)]', red: 'bg-[linear-gradient(135deg,#f08c6c,#cc3c14)]', bodyPad: 'pb-[1px] pr-[1px]',
  side: tasks + more, cols: 'grid-cols-[218px_218px]', scroll: '',
  items: [['folder48', 'HGooey Files'], ['dll', 'HGooey.dll'], ['dll', 'd3d8.dll']]
});
</script>
</body>
</html>
